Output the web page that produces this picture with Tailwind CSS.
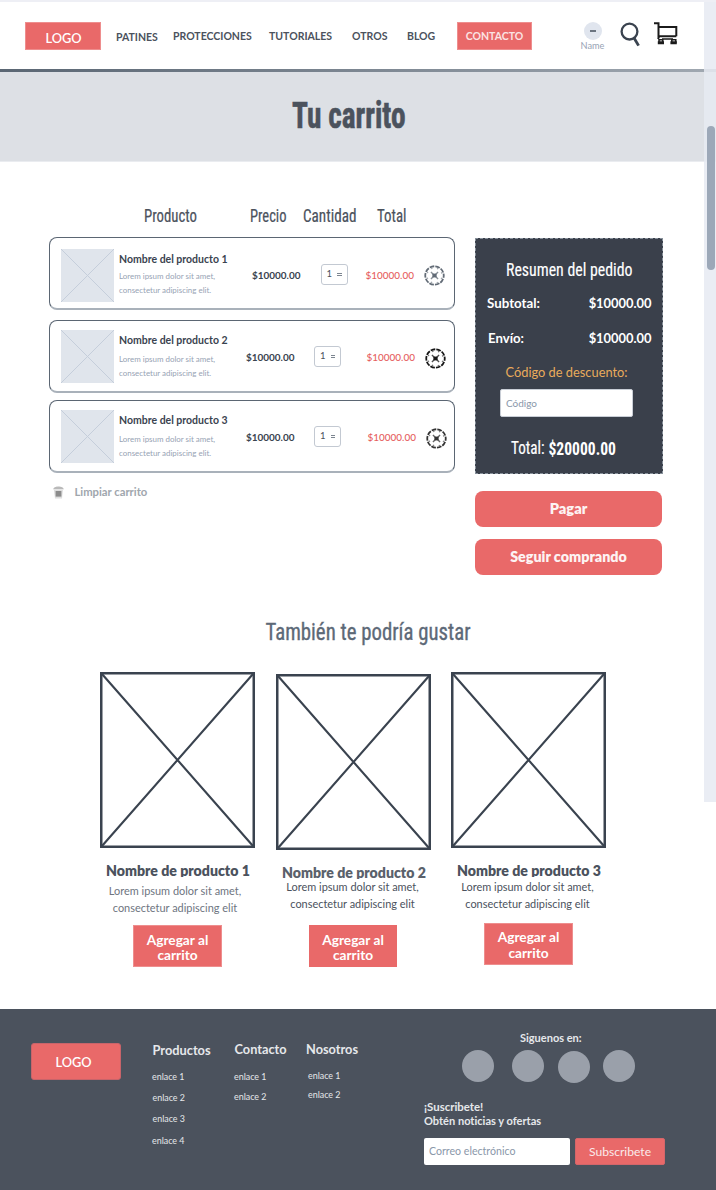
<!DOCTYPE html>
<html lang="es">
<head>
<meta charset="utf-8">
<title>Tu carrito</title>
<script src="https://cdn.jsdelivr.net/npm/@tailwindcss/browser@4"></script>
</head>
<body class="bg-white">
<svg width="0" height="0" class="absolute">
  <symbol id="thumb" viewBox="0 0 53 53"><rect width="53" height="53" fill="#e0e5ec"/><path d="M0 0L53 53M53 0L0 53" stroke="#c5cedb" stroke-width="1"/></symbol>
  <symbol id="photo" viewBox="0 0 155 176"><rect x="1.25" y="1.25" width="152.5" height="173.5" fill="#fff" stroke="#3a434f" stroke-width="2.5"/><path d="M2 2L153 174M153 2L2 174" stroke="#3a434f" stroke-width="2.1"/></symbol>
  <symbol id="remove" viewBox="0 0 20 20"><circle cx="10" cy="10" r="8.8" fill="none" stroke="currentColor" stroke-width="1.7" stroke-dasharray="4.5 1.03" stroke-dashoffset="2.25"/><circle cx="10" cy="10" r="7.2" fill="none" stroke="currentColor" stroke-width="1.2" stroke-dasharray="1.3 4.355" stroke-dashoffset="3.5" opacity=".6"/><path d="M6.6 6.6L13.4 13.4M13.4 6.6L6.6 13.4" stroke="currentColor" stroke-width="1.3" opacity=".75"/><rect x="8" y="8.2" width="4" height="3.6" fill="currentColor"/></symbol>
</svg>
<div class="relative w-[716px] h-[1190px] overflow-hidden flex flex-col font-['Lato',sans-serif] [font-variant-ligatures:none] text-[#3a434f] whitespace-nowrap">

  <header class="h-[69px] shrink-0 border-t-2 border-[#eeeff5] flex items-start pl-[25px] font-bold text-[10.5px] leading-[16px] text-[#4b525d]">
    <div class="mt-5 w-[76px] h-[28px] bg-[#e96969] border border-[#ee8e8e] text-white text-[12.8px] font-semibold flex items-center justify-center pt-[3px] pl-[1px]">LOGO</div>
    <nav class="flex">
      <a class="ml-[15px] mt-[27px] w-[57px]">PATINES</a>
      <a class="mt-[26px] w-[96px]">PROTECCIONES</a>
      <a class="mt-[26px] w-[83px]">TUTORIALES</a>
      <a class="mt-[26px] w-[55px]">OTROS</a>
      <a class="mt-[26px] w-[50px]">BLOG</a>
      <a class="mt-5 w-[75px] h-[28px] bg-[#e96969] border border-[#ee8e8e] text-[#fbe3e3] flex items-center justify-center">CONTACTO</a>
    </nav>
    <div class="ml-[48px] mt-5 w-[25px] flex flex-col items-center">
      <div class="size-[18px] rounded-full bg-[#e0e5ee] flex items-center justify-center"><div class="w-[6px] h-[1.5px] bg-[#6b7480]"></div></div>
      <span class="text-[9.2px] leading-[12px] font-normal text-[#97a3b4]">Name</span>
    </div>
    <svg class="ml-[15px] mt-5" width="22" height="26" viewBox="0 0 22 26" fill="none"><circle cx="9.5" cy="9.6" r="7.9" stroke="#3a434f" stroke-width="2.3"/><path d="M14.2 16.2L18.6 23.6" stroke="#3a434f" stroke-width="2.8"/></svg>
    <svg class="ml-[12px] mt-5" width="25" height="24" viewBox="0 0 25 24" fill="none" stroke="#1b1b1b" stroke-width="2"><path d="M0 1.2H4.5V14.2H22.3M4.5 4.9H22.3V14.2M5.2 14.4L4 17"/><path d="M5 21V17.8H8.8V21M17.8 21V17.8H21.8V21M8 17H19" stroke-width="1.5"/><path d="M3.8 20.8H10M16.4 20.8H22.8" stroke-width="3"/></svg>
  </header>
  <div class="h-[3px] shrink-0 bg-linear-to-r from-[#5a6673] to-[#a0a8b1]"></div>

  <section class="h-[90px] shrink-0 bg-[#dde0e5] border-b border-[#eaecf0] pl-[292px]">
    <svg width="114" height="80" class="overflow-visible"><text x="0" y="56" textLength="113.5" lengthAdjust="spacingAndGlyphs" stroke="#4b525d" stroke-width=".6" class="font-['Roboto',sans-serif] [font-stretch:75%] font-bold text-[36px]" fill="#4b525d">Tu carrito</text></svg>
  </section>

  <main class="flex h-[413px] shrink-0 pl-[49px] pt-[38px]">
    <section class="w-[406px]">
      <svg width="406" height="37" class="block font-['Roboto',sans-serif] [font-stretch:75%] text-[18.5px]" fill="#4b525d" stroke="#4b525d" stroke-width=".2">
        <text x="95" y="22" textLength="53" lengthAdjust="spacingAndGlyphs">Producto</text>
        <text x="201" y="22" textLength="36.5" lengthAdjust="spacingAndGlyphs">Precio</text>
        <text x="254" y="22" textLength="53.5" lengthAdjust="spacingAndGlyphs">Cantidad</text>
        <text x="328" y="22" textLength="29.5" lengthAdjust="spacingAndGlyphs">Total</text>
      </svg>
      <article class="h-[73px] rounded-[8px] border border-b-2 border-[#5b6673] border-b-[#a9b1ba] flex">
        <svg class="ml-[11px] mt-[10.5px]" width="53" height="53"><use href="#thumb"/></svg>
        <div class="ml-[5px] mt-[13px] w-[133px]">
          <h3 class="text-[10.5px] leading-4 font-bold">Nombre del producto 1</h3>
          <p class="mt-[2px] text-[7.95px] leading-[14px] text-[#97a3b4]">Lorem ipsum dolor sit amet,<br>consectetur adipiscing elit.</p>
        </div>
        <span class="mt-[29px] w-[68.5px] text-[9.95px] leading-4 font-bold">$10000.00</span>
        <div class="mt-[26px] w-[27px] h-[21px] rounded-[3px] border border-[#c3c9d2] flex items-center pl-[5px] gap-[5px] text-[9.5px] text-[#4b525d]"><span>1</span><span class="w-[4.5px] h-[3px] border-y border-[#7c8590]"></span></div>
        <span class="ml-[18px] mt-[29px] w-[58.5px] text-[9.95px] leading-4 font-medium text-[#e65f5f]">$10000.00</span>
        <svg class="mt-[27px] text-[#626b76]" width="21" height="21"><use href="#remove"/></svg>
      </article>
      <article class="mt-[10px] h-[73px] rounded-[8px] border border-b-2 border-[#5b6673] border-b-[#a9b1ba] flex">
        <svg class="ml-[11px] mt-[9px]" width="53" height="53"><use href="#thumb"/></svg>
        <div class="ml-[5px] mt-[11px] w-[127px]">
          <h3 class="text-[10.5px] leading-4 font-bold">Nombre del producto 2</h3>
          <p class="mt-[4px] text-[7.95px] leading-[14px] text-[#97a3b4]">Lorem ipsum dolor sit amet,<br>consectetur adipiscing elit.</p>
        </div>
        <span class="mt-[28px] w-[68px] text-[9.95px] leading-4 font-bold">$10000.00</span>
        <div class="mt-[25px] w-[27px] h-[21px] rounded-[3px] border border-[#c3c9d2] flex items-center pl-[5px] gap-[5px] text-[9.5px] text-[#4b525d]"><span>1</span><span class="w-[4.5px] h-[3px] border-y border-[#7c8590]"></span></div>
        <span class="ml-[25.5px] mt-[28px] w-[58px] text-[9.95px] leading-4 font-medium text-[#e65f5f]">$10000.00</span>
        <svg class="mt-[27px] text-[#161616]" width="21" height="21"><use href="#remove"/></svg>
      </article>
      <article class="mt-[7px] h-[73px] rounded-[8px] border border-b-2 border-[#5b6673] border-b-[#a9b1ba] flex">
        <svg class="ml-[11px] mt-[9px]" width="53" height="53"><use href="#thumb"/></svg>
        <div class="ml-[5px] mt-[11px] w-[127px]">
          <h3 class="text-[10.5px] leading-4 font-bold">Nombre del producto 3</h3>
          <p class="mt-[4px] text-[7.95px] leading-[14px] text-[#97a3b4]">Lorem ipsum dolor sit amet,<br>consectetur adipiscing elit.</p>
        </div>
        <span class="mt-[28px] w-[68px] text-[9.95px] leading-4 font-bold">$10000.00</span>
        <div class="mt-[25px] w-[27px] h-[21px] rounded-[3px] border border-[#c3c9d2] flex items-center pl-[5px] gap-[5px] text-[9.5px] text-[#4b525d]"><span>1</span><span class="w-[4.5px] h-[3px] border-y border-[#7c8590]"></span></div>
        <span class="ml-[26.5px] mt-[28px] w-[58px] text-[9.95px] leading-4 font-medium text-[#e65f5f]">$10000.00</span>
        <svg class="mt-[27px] text-[#333]" width="21" height="21"><use href="#remove"/></svg>
      </article>
      <div class="mt-[11px] ml-[4px] flex items-center text-[11.25px] leading-4 font-bold text-[#a0a6ad]">
        <svg width="11" height="13" viewBox="0 0 11 13"><path d="M0 3.2C2 .5 3 1 5.5 .6C8 1 9 .5 11 3.2Z" fill="#b9b9b9"/><path d="M.8 3.6H10L9 12.4H2Z" fill="#dedede"/><rect x="2.6" y="5" width="5.8" height="5.6" fill="#8c8c8c"/></svg>
        <span class="ml-[10.5px]">Limpiar carrito</span>
      </div>
    </section>

    <aside class="ml-[20px] mt-[38px] w-[188px] h-[337px]">
      <div class="h-[236px] bg-[#3a404b] border border-dashed border-[#88919b] text-white">
        <svg width="186" height="54" class="block font-['Roboto',sans-serif] [font-stretch:75%] text-[19px]" fill="#fff" stroke="#fff" stroke-width=".15"><text x="30" y="37" textLength="126.5" lengthAdjust="spacingAndGlyphs">Resumen del pedido</text></svg>
        <div class="flex justify-between pl-[11px] pr-[10.5px] leading-5 font-bold text-[12.9px]"><span class="text-[13.3px]">Subtotal:</span><span>$10000.00</span></div>
        <div class="mt-[15px] flex justify-between pl-[12px] pr-[10.5px] leading-5 font-bold text-[12.9px]"><span class="text-[13.2px]">Envío:</span><span>$10000.00</span></div>
        <div class="mt-[14px] ml-[29.5px] text-[12.83px] leading-5 text-[#e9ab5b]">Código de descuento:</div>
        <div class="ml-[24px] mt-[7px] w-[133px] h-[27.5px] rounded-[2px] bg-white border border-[#c9ced6] text-[10px] leading-[27px] pl-[5px] text-[#8a97a9]">Código</div>
        <svg width="186" height="50" class="block font-['Roboto',sans-serif] [font-stretch:75%] text-[18px]" fill="#fff"><text x="35" y="36.5" textLength="33.5" lengthAdjust="spacingAndGlyphs" stroke="#fff" stroke-width=".2">Total:</text><text x="72.5" y="38" textLength="67.5" lengthAdjust="spacingAndGlyphs" class="font-bold">$20000.00</text></svg>
      </div>
      <button class="mt-[17px] block w-[187px] h-[36px] rounded-[8px] bg-[#e96969] text-[#fdf3f3] font-extrabold text-[14.6px]">Pagar</button>
      <button class="mt-[12px] block w-[187px] h-[36px] rounded-[8px] bg-[#e96969] text-[#fdf3f3] font-extrabold text-[14.3px]">Seguir comprando</button>
    </aside>
  </main>

  <section class="h-[434px] shrink-0 pl-[100px]">
    <svg width="516" height="97" class="block"><text x="165.5" y="65.3" textLength="205" lengthAdjust="spacingAndGlyphs" stroke="#5d6977" stroke-width=".35" class="font-['Roboto',sans-serif] [font-stretch:75%] text-[24.5px]" fill="#5d6977">También te podría gustar</text></svg>
    <div class="flex items-start">
      <article class="w-[155px]">
        <svg width="155" height="176" class="block"><use href="#photo"/></svg>
        <h3 class="ml-[5.5px] mt-[12px] w-[170px] h-[16.5px] overflow-hidden text-[15.5px] leading-[20px] font-extrabold text-[#4b525d] origin-left scale-x-[.911]">Nombre de producto 1</h3>
        <p class="mt-[5px] -ml-[5px] text-center text-[10.95px] leading-[17px] text-[#6e757f]">Lorem ipsum dolor sit amet,<br>consectetur adipiscing elit</p>
        <button class="mt-[9.5px] ml-[33px] w-[89px] h-[42px] bg-[#e96969] border border-[#ee8e8e] text-white font-bold text-[13.7px] leading-[15px] pt-[1px]">Agregar al<br>carrito</button>
      </article>
      <article class="ml-[21px] mt-[2px] w-[155px]">
        <svg width="155" height="176" class="block"><use href="#photo"/></svg>
        <h3 class="ml-[6px] mt-[12px] w-[170px] h-[16.5px] overflow-hidden text-[15.5px] leading-[20px] font-extrabold text-[#5a616b] origin-left scale-x-[.911]">Nombre de producto 2</h3>
        <p class="mt-[-.5px] -ml-[2px] text-center text-[10.95px] leading-[17px] text-[#4b525d]">Lorem ipsum dolor sit amet,<br>consectetur adipiscing elit</p>
        <button class="mt-[13px] ml-[33px] w-[88px] h-[42px] bg-[#e96969] text-white font-bold text-[13.7px] leading-[15px] pt-[1px]">Agregar al<br>carrito</button>
      </article>
      <article class="ml-[20px] w-[155px]">
        <svg width="155" height="176" class="block"><use href="#photo"/></svg>
        <h3 class="ml-[5.5px] mt-[12px] w-[170px] h-[16.5px] overflow-hidden text-[15.5px] leading-[20px] font-extrabold text-[#4b525d] origin-left scale-x-[.911]">Nombre de producto 3</h3>
        <p class="mt-[1.5px] -ml-[2px] text-center text-[10.95px] leading-[17px] text-[#4b525d]">Lorem ipsum dolor sit amet,<br>consectetur adipiscing elit</p>
        <button class="mt-[11px] ml-[33px] w-[89px] h-[42px] bg-[#e96969] border border-[#ee8e8e] text-white font-bold text-[13.7px] leading-[16px] pt-[1px]">Agregar al<br>carrito</button>
      </article>
    </div>
  </section>

  <footer class="h-[181px] shrink-0 bg-[#4b525d] flex items-start pl-[31px] text-[#e6e8eb]">
    <div class="mt-[34px] w-[90px] h-[37px] rounded-[3px] bg-[#e96969] border border-[#c8646a] text-white text-[12.8px] font-semibold leading-[37px] pl-[23.5px]">LOGO</div>
    <div class="ml-[31px] mt-[33px] w-[82px] text-[8.9px] leading-4">
      <h4 class="text-[12.8px] leading-4 font-bold ml-[.5px]">Productos</h4>
      <p class="mt-[11px]">enlace 1</p><p class="mt-[5px] ml-[.5px]">enlace 2</p><p class="mt-[5px] ml-[.5px]">enlace 3</p><p class="mt-[6px]">enlace 4</p>
    </div>
    <div class="mt-[32px] w-[72px] text-[8.9px] leading-4">
      <h4 class="text-[12.75px] leading-4 font-bold ml-[.5px]">Contacto</h4>
      <p class="mt-[12px]">enlace 1</p><p class="mt-[4px]">enlace 2</p>
    </div>
    <div class="mt-[32px] w-[118px] text-[8.9px] leading-4">
      <h4 class="text-[12.75px] leading-4 font-bold">Nosotros</h4>
      <p class="mt-[11px] ml-[2px]">enlace 1</p><p class="mt-[3px] ml-[2px]">enlace 2</p>
    </div>
    <div class="w-[241px] mt-[21px]">
      <h4 class="ml-[96px] text-[11px] leading-4 font-bold">Siguenos en:</h4>
      <div class="mt-[4px] ml-[38px] flex">
        <span class="size-8 rounded-full bg-[#9aa0aa]"></span>
        <span class="ml-[18px] size-8 rounded-full bg-[#9aa0aa]"></span>
        <span class="ml-[14px] mt-[1px] size-8 rounded-full bg-[#9aa0aa]"></span>
        <span class="ml-[13px] size-8 rounded-full bg-[#9aa0aa]"></span>
      </div>
      <p class="mt-[17px] text-[11.05px] leading-[14px] font-bold"><span class="text-[11.4px]">¡Suscribete!</span><br>Obtén noticias y ofertas</p>
      <div class="mt-[10px] flex">
        <div class="w-[146px] h-[27px] rounded-[2px] bg-white text-[10.6px] leading-[27px] pl-[5px] text-[#8a97a9]">Correo electrónico</div>
        <button class="ml-[5px] w-[90px] h-[27px] rounded-[2px] bg-[#e96969] border border-[#d4666a] text-[12.1px] text-[#fbe9e9] pt-[1px]">Subscribete</button>
      </div>
    </div>
  </footer>

  <div class="absolute right-0 top-[2px] w-[12px] h-[800px] bg-[#e6eaf2]/85">
    <div class="absolute left-[3px] top-[124px] w-[8px] h-[144px] rounded-full bg-[#9ca8b8]"></div>
  </div>
</div>
</body>
</html>
